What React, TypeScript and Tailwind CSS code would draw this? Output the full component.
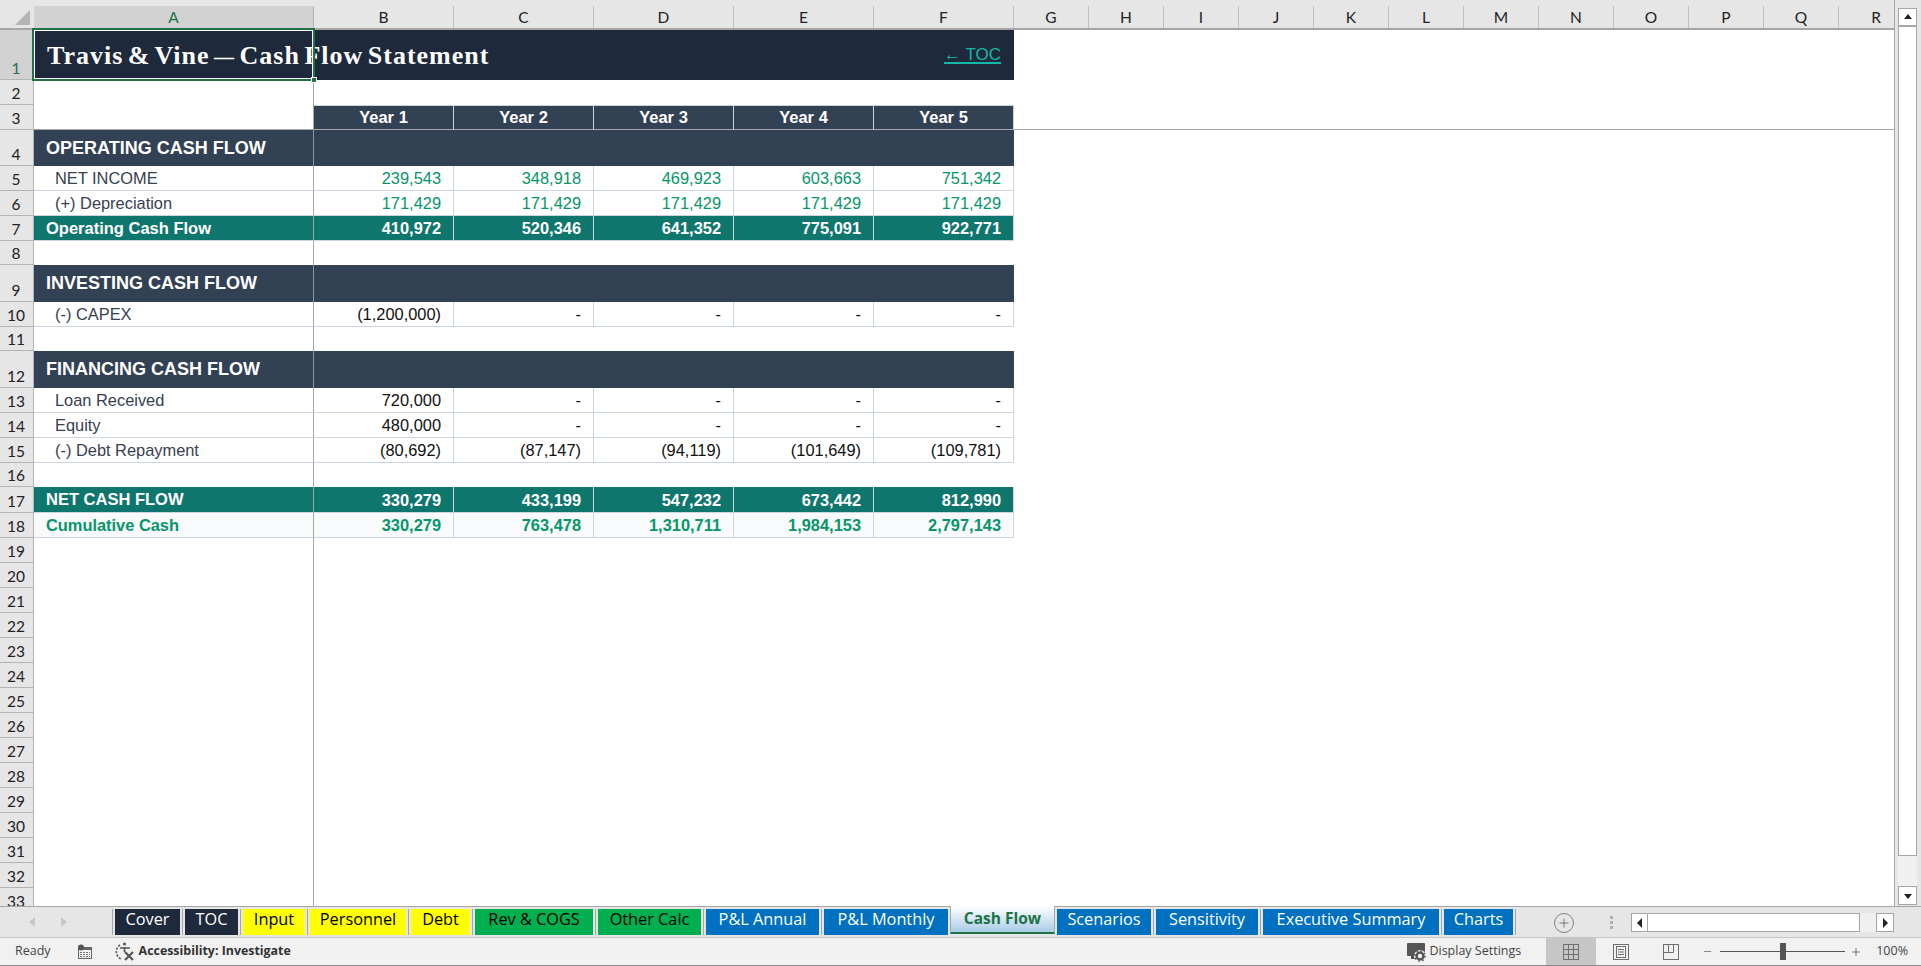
import { Plus, Minus } from "lucide-react";

const SANS = "font-['Liberation_Sans',Arial,sans-serif]";
const UI = "font-['Lato',sans-serif]";
const TAB_FONT = "font-['Open_Sans',sans-serif]";

type Kind = "blank" | "header" | "section" | "data" | "total" | "cumul";

interface SheetRow {
  n: number;
  kind: Kind;
  h: string;
  label?: string;
  values?: string[];
  green?: boolean;
}

const sheetRows: SheetRow[] = [
  { n: 2, kind: "blank", h: "h-[25px]" },
  { n: 3, kind: "header", h: "h-[25px]", values: ["Year 1", "Year 2", "Year 3", "Year 4", "Year 5"] },
  { n: 4, kind: "section", h: "h-[36px]", label: "OPERATING CASH FLOW" },
  { n: 5, kind: "data", h: "h-[25px]", label: "NET INCOME", green: true, values: ["239,543", "348,918", "469,923", "603,663", "751,342"] },
  { n: 6, kind: "data", h: "h-[25px]", label: "(+) Depreciation", green: true, values: ["171,429", "171,429", "171,429", "171,429", "171,429"] },
  { n: 7, kind: "total", h: "h-[25px]", label: "Operating Cash Flow", values: ["410,972", "520,346", "641,352", "775,091", "922,771"] },
  { n: 8, kind: "blank", h: "h-[24px]" },
  { n: 9, kind: "section", h: "h-[37px]", label: "INVESTING CASH FLOW" },
  { n: 10, kind: "data", h: "h-[25px]", label: "(-) CAPEX", values: ["(1,200,000)", "-", "-", "-", "-"] },
  { n: 11, kind: "blank", h: "h-[24px]" },
  { n: 12, kind: "section", h: "h-[37px]", label: "FINANCING CASH FLOW" },
  { n: 13, kind: "data", h: "h-[25px]", label: "Loan Received", values: ["720,000", "-", "-", "-", "-"] },
  { n: 14, kind: "data", h: "h-[25px]", label: "Equity", values: ["480,000", "-", "-", "-", "-"] },
  { n: 15, kind: "data", h: "h-[25px]", label: "(-) Debt Repayment", values: ["(80,692)", "(87,147)", "(94,119)", "(101,649)", "(109,781)"] },
  { n: 16, kind: "blank", h: "h-[24px]" },
  { n: 17, kind: "total", h: "h-[26px]", label: "NET CASH FLOW", values: ["330,279", "433,199", "547,232", "673,442", "812,990"] },
  { n: 18, kind: "cumul", h: "h-[25px]", label: "Cumulative Cash", values: ["330,279", "763,478", "1,310,711", "1,984,153", "2,797,143"] },
  ...Array.from({ length: 15 }, (_, i) => ({ n: 19 + i, kind: "blank" as Kind, h: "h-[25px]" })),
];

const tabs = [
  { name: "Cover", w: "w-[65px]", cls: "bg-[#1e293b] text-white" },
  { name: "TOC", w: "w-[53px]", cls: "bg-[#1e293b] text-white" },
  { name: "Input", w: "w-[62px]", cls: "bg-[#ffff00] text-black" },
  { name: "Personnel", w: "w-[96px]", cls: "bg-[#ffff00] text-black" },
  { name: "Debt", w: "w-[59px]", cls: "bg-[#ffff00] text-black" },
  { name: "Rev & COGS", w: "w-[118px]", cls: "bg-[#00b050] text-black" },
  { name: "Other Calc", w: "w-[103px]", cls: "bg-[#00b050] text-black" },
  { name: "P&L Annual", w: "w-[113px]", cls: "bg-[#0070c0] text-white" },
  { name: "P&L Monthly", w: "w-[124px]", cls: "bg-[#0070c0] text-white" },
  { name: "Cash Flow", w: "w-[105px]", active: true, cls: "" },
  { name: "Scenarios", w: "w-[94px]", cls: "bg-[#0070c0] text-white" },
  { name: "Sensitivity", w: "w-[102px]", cls: "bg-[#0070c0] text-white" },
  { name: "Executive Summary", w: "w-[176px]", cls: "bg-[#0070c0] text-white" },
  { name: "Charts", w: "w-[69px]", cls: "bg-[#0070c0] text-white" },
];

const RowHead = ({ n, selected }: { n: number; selected?: boolean }) => (
  <div
    className={`w-[34px] shrink-0 flex items-end justify-center pr-px border-r border-b border-[#b4b4b4] ${UI} text-[15.5px] leading-[21px] ${
      selected ? "bg-[#d2d2d2] text-[#217346]" : "bg-[#e6e6e6] text-[#222222]"
    }`}
  >
    {n}
  </div>
);

const Cell = ({ children, className }: { children?: React.ReactNode; className: string }) => (
  <div className={`w-[140px] shrink-0 flex items-center justify-end pt-px pr-[12px] ${className}`}>{children}</div>
);

const Row = ({ row }: { row: SheetRow }) => {
  const vals = row.values ?? [];

  let content = null;
  if (row.kind === "blank") {
    content = <div className="w-[280px] shrink-0 border-r border-[#a6a6a6]" />;
  }
  if (row.kind === "header") {
    content = (
      <>
        <div className="w-[280px] shrink-0 border-r border-b border-[#a6a6a6]" />
        {vals.map((v) => (
          <div
            key={v}
            className={`w-[140px] shrink-0 flex items-center justify-center bg-[#334155] border-t border-r border-[#cbd5e1] border-b-[#a6a6a6] border-b ${SANS} text-[16.5px] font-bold text-white`}
          >
            {v}
          </div>
        ))}
        <div className="flex-1 border-b border-[#a6a6a6]" />
      </>
    );
  }
  if (row.kind === "section") {
    content = (
      <>
        <div className={`w-[280px] shrink-0 flex items-center pl-[12px] bg-[#334155] border-r border-[#8a94a3] ${SANS} text-[18px] font-bold text-white`}>
          {row.label}
        </div>
        <div className="w-[700px] shrink-0 bg-[#334155]" />
      </>
    );
  }
  if (row.kind === "data") {
    content = (
      <>
        <div className={`w-[280px] shrink-0 flex items-center pt-px pl-[21px] border-r border-r-[#a6a6a6] border-b border-b-[#cbd5e1] ${SANS} text-[16.4px] text-[#374151]`}>
          {row.label}
        </div>
        {vals.map((v, i) => (
          <Cell
            key={i}
            className={`border-r border-b border-[#cbd5e1] ${SANS} text-[16.4px] ${row.green ? "text-[#059669]" : "text-[#111111]"}`}
          >
            {v}
          </Cell>
        ))}
      </>
    );
  }
  if (row.kind === "total") {
    content = (
      <>
        <div className={`w-[280px] shrink-0 flex items-center pl-[12px] bg-[#0f766e] border-r border-r-[#a6a6a6] border-b border-b-[#cbd5e1] ${SANS} text-[16.5px] font-bold text-white`}>
          {row.label}
        </div>
        {vals.map((v, i) => (
          <Cell key={i} className={`bg-[#0f766e] border-r border-b border-[#cbd5e1] ${SANS} text-[16.4px] font-bold text-white`}>
            {v}
          </Cell>
        ))}
      </>
    );
  }
  if (row.kind === "cumul") {
    content = (
      <>
        <div className={`w-[280px] shrink-0 flex items-center pl-[12px] bg-[#f8fafc] border-r border-r-[#a6a6a6] border-b border-b-[#cbd5e1] ${SANS} text-[16.4px] font-bold text-[#059669]`}>
          {row.label}
        </div>
        {vals.map((v, i) => (
          <Cell key={i} className={`bg-[#f8fafc] border-r border-b border-[#cbd5e1] ${SANS} text-[16.4px] font-bold text-[#059669]`}>
            {v}
          </Cell>
        ))}
      </>
    );
  }

  return (
    <div className={`flex shrink-0 ${row.h}`}>
      <RowHead n={row.n} />
      {content}
    </div>
  );
};

const TriBtn = ({ dir }: { dir: "up" | "down" | "left" | "right" }) => {
  const pts = {
    up: "1,7 5,2 9,7",
    down: "1,3 5,8 9,3",
    left: "7,0 2,5 7,10",
    right: "3,0 8,5 3,10",
  }[dir];
  return (
    <svg width="10" height="10" viewBox="0 0 10 10">
      <polygon points={pts} fill="#222222" />
    </svg>
  );
};

export default function App() {
  const columns = ["G", "H", "I", "J", "K", "L", "M", "N", "O", "P", "Q", "R"];

  return (
    <div className="w-[1921px] h-[966px] flex flex-col overflow-hidden bg-white">
      <div className="flex flex-1 min-h-0">
        {/* sheet */}
        <div className="relative w-[1895px] shrink-0 flex flex-col overflow-hidden border-r border-[#a6a6a6]">
          {/* column letters */}
          <div className={`flex h-[30px] shrink-0 bg-[#e6e6e6] pt-[6px] border-b-2 border-[#a6a6a6] ${UI} text-[15.5px] text-[#222222]`}>
            <div className="w-[34px] shrink-0 flex items-start">
              <svg width="34" height="22" viewBox="0 0 34 22">
                <polygon points="30,4 30,19 15,19" fill="#b4b4b4" />
              </svg>
            </div>
            <div className="w-[280px] shrink-0 flex items-center justify-center pt-px bg-[#d2d2d2] text-[#217346] border-r border-[#b4b4b4]">A</div>
            {["B", "C", "D", "E", "F"].map((c) => (
              <div key={c} className="w-[140px] shrink-0 flex items-center justify-center pt-px border-r border-[#c0c0c0]">
                {c}
              </div>
            ))}
            {columns.map((c) => (
              <div key={c} className="w-[75px] shrink-0 flex items-center justify-center pt-px border-r border-[#c0c0c0]">
                {c}
              </div>
            ))}
          </div>

          {/* row 1 */}
          <div className="flex h-[50px] shrink-0">
            <RowHead n={1} selected />
            <div className="w-[980px] shrink-0 flex items-center justify-between pl-[13px] pr-[13px] bg-[#1e293b]">
              <span className="font-['Liberation_Serif',Georgia,serif] text-[26px] tracking-[1px] [word-spacing:-3px] font-bold text-white">
                Travis &amp; Vine <span className="text-[20px]">—</span> Cash Flow Statement
              </span>
              <span className={`${SANS} text-[17px] font-medium text-[#14b8a6] underline decoration-2 underline-offset-2`}>← TOC</span>
            </div>
          </div>

          {sheetRows.map((row) => (
            <Row key={row.n} row={row} />
          ))}

          {/* selected cell A1 */}
          <div className="absolute left-[32px] top-[28px] w-[283px] h-[53px] border-2 border-[#217346] pointer-events-none">
            <div className="w-full h-full border border-white" />
            <div className="absolute right-[-4px] bottom-[-4px] w-[6px] h-[6px] bg-[#217346] border border-white" />
          </div>
        </div>

        {/* vertical scrollbar */}
        <div className="flex-1 flex flex-col pt-[8px] pb-[1px] pl-[3px] pr-[4px] bg-[#e6e6e6]">
          <div className="h-[19px] shrink-0 flex items-center justify-center bg-white border border-b-2 border-[#a6a6a6]">
            <TriBtn dir="up" />
          </div>
          <div className="h-[829px] shrink-0 bg-white border-x border-b border-[#a6a6a6]" />
          <div className="flex-1 bg-[#f0f0f0]" />
          <div className="h-[19px] shrink-0 flex items-center justify-center bg-white border border-[#a6a6a6]">
            <TriBtn dir="down" />
          </div>
        </div>
      </div>

      {/* sheet tabs */}
      <div className={`h-[32px] shrink-0 flex items-start bg-[#e6e6e6] border-t border-[#a6a6a6] border-b border-b-[#c6c6c6] ${TAB_FONT} text-[16.3px]`}>
        <div className="w-[113px] h-[26px] mt-[2px] flex items-center shrink-0 border-r border-[#a6a6a6] text-[#c4c4c4]">
          <div className="ml-[28px]"><svg width="8" height="12" viewBox="0 0 8 12"><polygon points="7,1 1,6 7,11" fill="#c8c8c8" /></svg></div>
          <div className="ml-[24px]"><svg width="8" height="12" viewBox="0 0 8 12"><polygon points="1,1 7,6 1,11" fill="#c8c8c8" /></svg></div>
        </div>
        <div className="flex items-start pl-[2px]">
          {tabs.map((t, i) => (
            <div key={t.name} className="flex items-start">
              {t.active ? (
                <div className={`${t.w} h-[28px] -mt-px pb-px flex items-center justify-center bg-gradient-to-b from-white to-[#a9cce8] border-x border-[#a6a6a6] border-b-2 border-b-[#217346] font-bold text-[15.5px] text-[#217346]`}>
                  {t.name}
                </div>
              ) : (
                <div className={`${t.w} h-[26px] mt-[2px] pb-[5px] flex items-center justify-center ${t.cls}`}>{t.name}</div>
              )}
              {i < tabs.length - 1 && !t.active && !tabs[i + 1].active && (
                <div className="w-px h-[26px] mt-[2px] mx-[2px] bg-[#a6a6a6]" />
              )}
              {!t.active && tabs[i + 1]?.active && <div className="w-[2px]" />}
              {t.active && <div className="w-[2px]" />}
            </div>
          ))}
          <div className="w-px h-[26px] mt-[2px] ml-[2px] bg-[#a6a6a6]" />
        </div>

        <div className="ml-[38px] mt-[6px] w-[20px] h-[20px] rounded-full border border-[#808080] flex items-center justify-center text-[#6b6b6b]">
          <Plus size={14} strokeWidth={1.5} />
        </div>
        <div className="ml-[36px] mt-[9px] flex flex-col gap-[2px]">
          <div className="w-[3px] h-[3px] bg-[#b0b0b0]" />
          <div className="w-[3px] h-[3px] bg-[#b0b0b0]" />
          <div className="w-[3px] h-[3px] bg-[#b0b0b0]" />
        </div>

        {/* horizontal scrollbar */}
        <div className="ml-[18px] mt-[6px] flex h-[19px] w-[263px] bg-[#f0f0f0]">
          <div className="w-[17px] flex items-center justify-center bg-white border border-[#a6a6a6]"><TriBtn dir="left" /></div>
          <div className="w-[212px] bg-white border-y border-r border-[#a6a6a6]" />
          <div className="flex-1" />
          <div className="w-[18px] flex items-center justify-center bg-white border border-[#a6a6a6]"><TriBtn dir="right" /></div>
        </div>
      </div>

      {/* status bar */}
      <div className={`h-[28px] shrink-0 flex items-center bg-[#f1f1f1] border-b border-[#8a8a8a] ${TAB_FONT} text-[12.5px] text-[#444444]`}>
        <span className="ml-[15px]">Ready</span>
        <svg className="ml-[26px]" width="16" height="16" viewBox="0 0 16 16">
          <rect x="1.5" y="3.5" width="13" height="11" fill="#f1f1f1" stroke="#666666" />
          <rect x="1" y="3" width="14" height="3" fill="#666666" />
          <circle cx="4" cy="3.5" r="3" fill="#555555" />
          <path d="M3 8.5h10M3 10.5h10M3 12.5h10" stroke="#777777" strokeDasharray="2 1" />
        </svg>
        <svg className="ml-[21px]" width="21" height="21" viewBox="0 0 21 21" fill="none" stroke="#555555">
          <path d="M6 4A8 8 0 0 0 7 18" strokeDasharray="2.2 1.4" strokeWidth="1.6" />
          <circle cx="10.5" cy="3" r="1.5" fill="#555555" stroke="none" />
          <path d="M6 7h10M10.5 6v5" strokeWidth="1.6" />
          <path d="M11 11l8 8M19 11l-8 8" strokeWidth="2.2" />
        </svg>
        <span className="ml-[4px] font-bold text-[12.4px] text-[#333333]">Accessibility: Investigate</span>

        <div className="ml-auto flex items-center h-full">
          <svg width="22" height="20" viewBox="0 0 22 20">
            <rect x="0" y="1" width="18" height="13" rx="1" fill="#555555" />
            <rect x="4" y="14" width="5" height="3" fill="#555555" />
            <circle cx="13" cy="14" r="6" fill="#f1f1f1" />
            <circle cx="13" cy="14" r="3.4" fill="none" stroke="#555555" strokeWidth="2.4" />
            <circle cx="13" cy="14" r="5" fill="none" stroke="#555555" strokeWidth="1.6" strokeDasharray="1.6 2.3" />
          </svg>
          <span className="mr-[25px]">Display Settings</span>

          <div className="w-[50px] h-full flex items-center justify-center bg-[#c6c6c6]">
            <svg width="16" height="16" viewBox="0 0 16 16" fill="none" stroke="#707070">
              <rect x="0.5" y="0.5" width="15" height="15" />
              <path d="M5.5 0v16M10.5 0v16M0 5.5h16M0 10.5h16" />
            </svg>
          </div>
          <div className="w-[50px] flex justify-center">
            <svg width="16" height="16" viewBox="0 0 16 16" fill="none" stroke="#707070">
              <rect x="0.5" y="0.5" width="15" height="15" />
              <rect x="3.5" y="2.5" width="9" height="11" />
              <path d="M5 5.5h6M5 8h6M5 10.5h6" />
            </svg>
          </div>
          <div className="w-[50px] flex justify-center">
            <svg width="16" height="16" viewBox="0 0 16 16" fill="none" stroke="#707070">
              <rect x="0.5" y="0.5" width="15" height="15" />
              <path d="M0 8.5h10.5V0M5.5 0v8.5" />
            </svg>
          </div>

          <Minus className="ml-[6px] text-[#555555]" size={11} strokeWidth={1.5} />
          <div className="relative ml-[7px] w-[125px] h-px bg-[#555555]">
            <div className="absolute left-[60px] top-[-8px] w-[6px] h-[17px] bg-[#555555]" />
          </div>
          <Plus className="ml-[5px] text-[#555555]" size={12} strokeWidth={1.5} />
          <span className="ml-[14px] mr-[13px]">100%</span>
        </div>
      </div>
    </div>
  );
}
